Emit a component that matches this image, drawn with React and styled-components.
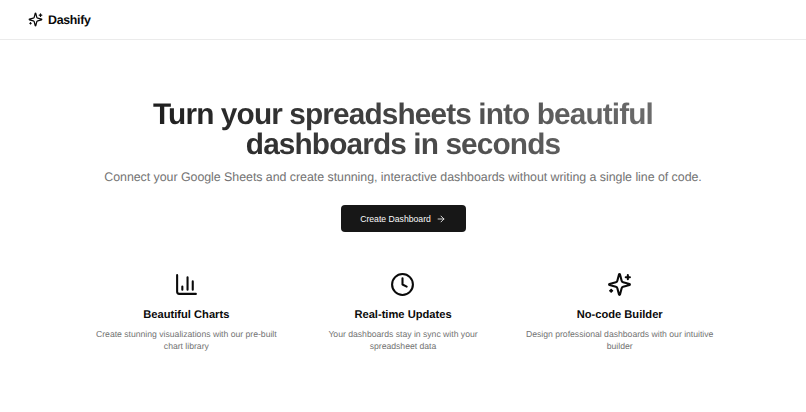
import styled, { createGlobalStyle } from "styled-components";
import { ArrowRight, Clock } from "lucide-react";

const GlobalStyle = createGlobalStyle`
  * {
    box-sizing: border-box;
  }
  body {
    margin: 0;
    font-family: "Liberation Sans", Arial, sans-serif;
    color: #0a0a0a;
    background-color: #fff;
    text-rendering: geometricPrecision;
  }
  h1, h3, p {
    margin: 0;
  }
`
const Header = styled.header`
  height: 40px;
  padding: 0 28px;
  display: flex;
  align-items: center;
  border-bottom: 1px solid #ebebeb;
`
const Brand = styled.div`
  display: flex;
  align-items: center;
  gap: 5px;
  font-size: 12.4px;
  font-weight: 700;
  letter-spacing: -0.31px;
`
const Main = styled.main`
  padding-top: 60px;
  display: flex;
  flex-direction: column;
  align-items: center;
  text-align: center;
`
const Title = styled.h1`
  width: 598px;
  padding: 0 40px;
  font-size: 29.8px;
  line-height: 30px;
  letter-spacing: -0.88px;
  color: transparent;
  background: linear-gradient(to right, #171717, #737373);
  background-clip: text;
`
const Lead = styled.p`
  margin-top: 8px;
  font-size: 12.4px;
  line-height: 18px;
  letter-spacing: -0.035px;
  color: #737373;
`
const Button = styled.button`
  width: 125px;
  height: 27px;
  margin-top: 19px;
  display: flex;
  align-items: center;
  justify-content: center;
  gap: 5px;
  font-family: inherit;
  font-size: 8.67px;
  color: #fafafa;
  border: none;
  border-radius: 4px;
  background-color: #171717;
  cursor: pointer;
`
const FeatureGrid = styled.div`
  width: 630px;
  margin-top: 39.5px;
  display: grid;
  grid-template-columns: repeat(3, 1fr);
  gap: 20px;
`
const FeatureItem = styled.div`
  display: flex;
  flex-direction: column;
  align-items: center;
`
const FeatureTitle = styled.h3`
  margin-top: 10.5px;
  font-size: 11.15px;
  line-height: 16px;
`
const FeatureText = styled.p`
  margin-top: 5px;
  font-size: 8.67px;
  line-height: 12.4px;
  letter-spacing: -0.015px;
  color: #737373;
`
const Outline = styled.svg.attrs({ viewBox: "0 0 24 24" })`
  fill: none;
  stroke: currentColor;
  stroke-width: 2;
  stroke-linecap: round;
  stroke-linejoin: round;
`

function StarIcon({ size }) {
  return (
    <Outline width={size} height={size}>
      <path d="M9.937 15.5A2 2 0 0 0 8.5 14.063l-6.135-1.582a.5.5 0 0 1 0-.962L8.5 9.936A2 2 0 0 0 9.937 8.5l1.582-6.135a.5.5 0 0 1 .963 0L14.063 8.5A2 2 0 0 0 15.5 9.937l6.135 1.581a.5.5 0 0 1 0 .964L15.5 14.063a2 2 0 0 0-1.437 1.437l-1.582 6.135a.5.5 0 0 1-.963 0z" />
      <path d="M20 3v4M22 5h-4M4 17v2M5 18H3" />
    </Outline>
  );
}

function ChartIcon({ size }) {
  return (
    <Outline width={size} height={size}>
      <path d="M3 3v16a2 2 0 0 0 2 2h16" />
      <path d="M18 17V9M13 17V5M8 17v-3" />
    </Outline>
  );
}

const features = [
  { icon: ChartIcon, title: "Beautiful Charts", text: "Create stunning visualizations with our pre-built chart library" },
  { icon: Clock, title: "Real-time Updates", text: "Your dashboards stay in sync with your spreadsheet data" },
  { icon: StarIcon, title: "No-code Builder", text: "Design professional dashboards with our intuitive builder" },
];

function App() {
  return (
    <>
      <GlobalStyle />
      <Header>
        <Brand><StarIcon size={15} />Dashify</Brand>
      </Header>
      <Main>
        <Title>Turn your spreadsheets into beautiful dashboards in seconds</Title>
        <Lead>Connect your Google Sheets and create stunning, interactive dashboards without writing a single line of code.</Lead>
        <Button>Create Dashboard <ArrowRight size={10} /></Button>
        <FeatureGrid>
          {features.map(({ icon: Icon, title, text }) => (
            <FeatureItem key={title}>
              <Icon size={25} />
              <FeatureTitle>{title}</FeatureTitle>
              <FeatureText>{text}</FeatureText>
            </FeatureItem>
          ))}
        </FeatureGrid>
      </Main>
    </>
  );
}

export default App;
